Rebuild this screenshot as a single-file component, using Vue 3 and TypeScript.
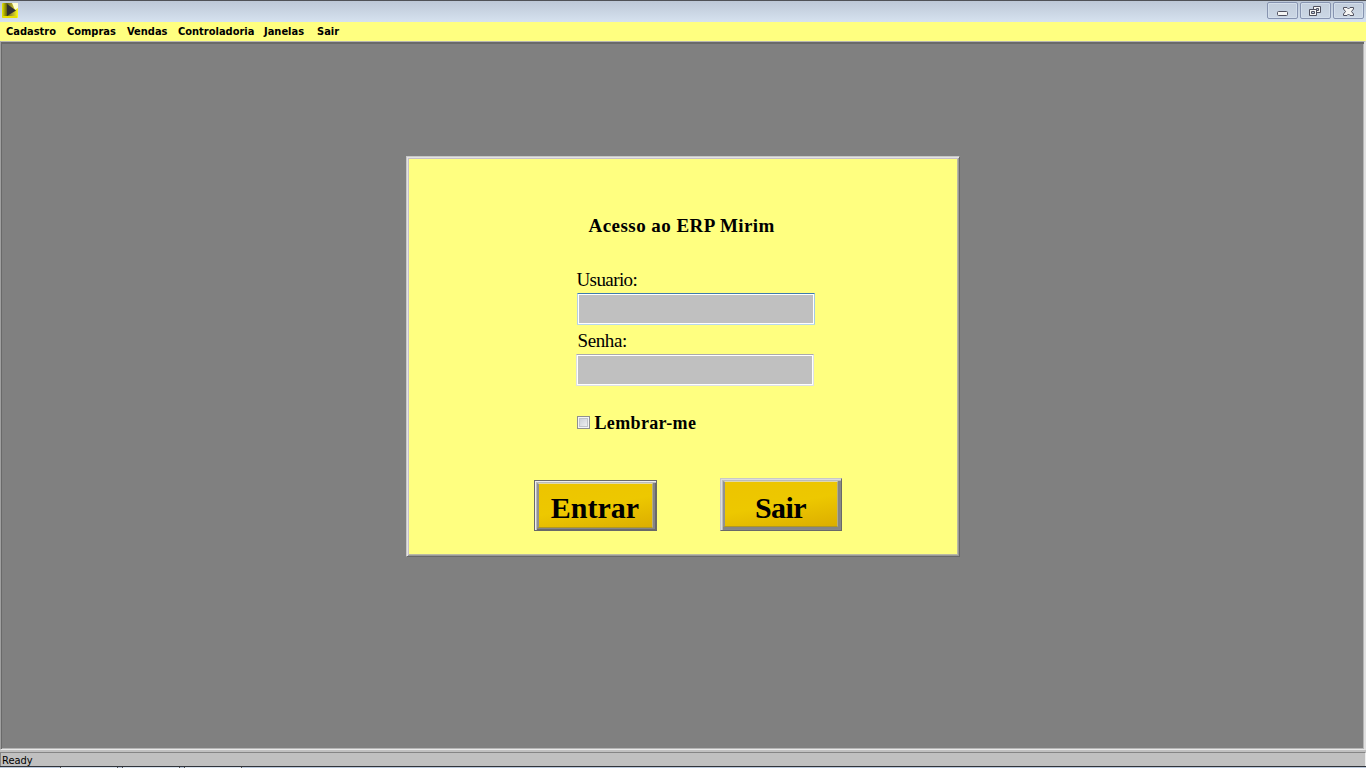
<script setup lang="ts">
import { ref } from 'vue'

const menus: { label: string; width: number }[] = [
  { label: 'Cadastro', width: 51 },
  { label: 'Compras', width: 50 },
  { label: 'Vendas', width: 41 },
  { label: 'Controladoria', width: 76 },
  { label: 'Janelas', width: 43 },
  { label: 'Sair', width: 22 },
]
const user = ref('')
const password = ref('')
const remember = ref(false)
</script>

<template>
  <div class="window">
    <header class="titlebar">
      <svg class="logo" width="16" height="15" viewBox="0 0 16 15">
        <defs>
          <linearGradient id="gold" x1="0" x2="1" y1="0" y2="0">
            <stop offset="0" stop-color="#e8e800" />
            <stop offset="0.3" stop-color="#66660c" />
            <stop offset="0.65" stop-color="#b0a830" />
            <stop offset="1" stop-color="#ffff10" />
          </linearGradient>
        </defs>
        <rect width="16" height="15" rx="1" fill="url(#gold)" />
        <path d="M10 0h6v5l-3 2z" fill="#ffffd0" />
        <path d="M1 13h14v2H1z" fill="#e8df00" />
        <path d="M5 1l9 6.500L5 13z" fill="#303033" />
      </svg>
      <div class="controls">
        <button class="control" aria-label="Minimize">
          <svg width="29" height="15" viewBox="0 0 29 15">
            <rect x="9.5" y="8.500" width="10" height="4" rx="1" fill="#f5f5f3" stroke="#50515f" />
          </svg>
        </button>
        <button class="control" aria-label="Restore">
          <svg width="29" height="15" viewBox="0 0 29 15">
            <path d="M12.500 3.500h7v6h-7z" fill="#f5f5f3" stroke="#50515f" />
            <path d="M15.500 5.500h2v2h-2z" fill="#b8c5d6" stroke="#50515f" />
            <path d="M8.500 6.500h7v6h-7z" fill="#f5f5f3" stroke="#50515f" />
            <path d="M10.500 8.500h3v2h-3z" fill="#b8c5d6" stroke="#50515f" />
          </svg>
        </button>
        <button class="control" aria-label="Close">
          <svg width="29" height="15" viewBox="0 0 29 15">
            <path d="M9.500 4.500h3.500l1.500 1.500 1.500-1.500h3.500v1.500L17.500 8.500l2 2.500v1.500H16l-1.500-1.500-1.500 1.500H9.500V11l2-2.500-2-2.500z" fill="#f5f5f3" stroke="#50515f" />
          </svg>
        </button>
      </div>
    </header>

    <nav class="menubar">
      <span v-for="menu in menus" :key="menu.label" class="menu" :style="{ width: menu.width + 'px' }">{{ menu.label }}</span>
    </nav>

    <main class="workspace">
      <form class="dialog" @submit.prevent>
        <h1 class="title">Acesso ao ERP Mirim</h1>
        <label class="label user-label" for="user">Usuario:</label>
        <input id="user" v-model="user" class="field focused" type="text" />
        <label class="label password-label" for="password">Senha:</label>
        <input id="password" v-model="password" class="field password" type="password" />
        <label class="remember">
          <input v-model="remember" class="check" type="checkbox" />
          <span>Lembrar-me</span>
        </label>
        <div class="actions">
          <button class="action enter" type="submit"><span class="face">Entrar</span></button>
          <button class="action leave" type="button"><span class="face">Sair</span></button>
        </div>
      </form>
    </main>

    <footer class="status"><span>Ready</span></footer>
    <div class="taskbar"><i></i><i></i><i></i></div>
  </div>
</template>

<style>
body { margin: 0; overflow: hidden; }
</style>

<style scoped>
* { box-sizing: border-box; }
.window {
  width: 1366px;
  height: 768px;
  display: flex;
  flex-direction: column;
  overflow: hidden;
  background: #c0c0c0;
  color: #000;
}
.titlebar {
  height: 22px;
  flex: none;
  display: flex;
  justify-content: space-between;
  align-items: flex-start;
  padding: 0 2px;
  border-top: 1px solid #505257;
  background: linear-gradient(#bdc8d7, #d6e2ef);
}
.logo { margin-top: 2px; }
.controls { display: flex; gap: 2px; margin-top: 1px; }
.control {
  width: 31px;
  height: 17px;
  padding: 0;
  border: 1px solid #8794b0;
  border-radius: 2px;
  background: linear-gradient(#c3cedc, #cbd7e5);
  box-shadow: inset 0 0 0 1px #d3deeb;
}
.control svg { display: block; }
.menubar {
  height: 19px;
  flex: none;
  display: flex;
  gap: 10px;
  padding-left: 6px;
  background: #ffff80;
  font: bold 11px/19px "DejaVu Sans Condensed", "DejaVu Sans", sans-serif;
}
.menu { white-space: nowrap; }
.workspace {
  height: 709px;
  flex: none;
  display: flex;
  justify-content: center;
  align-items: flex-start;
  padding-top: 114px;
  border: 1px solid #b5b5b2;
  border-left-color: #a0a0a0;
  border-bottom: 1px solid #e8e8e8;
  border-right: 2px solid #e0e0e0;
  background: #808080;
  box-shadow: inset 1px 1px 0 #696969, inset 0 2px 0 #696969, inset -1px -1px 0 #b5b5b5;
}
.dialog {
  width: 554px;
  height: 401px;
  padding: 54px 0 0 168px;
  border: 1px solid;
  border-color: #c7c7c7 #696969 #696969 #c7c7c7;
  background: #ffff80;
  box-shadow: inset 1px 1px 0 #e3e3e3, inset -1px -1px 0 #999, inset 2px 2px 0 #c8c0c8, inset -2px -2px 0 #b9b9a2;
  font-family: "Liberation Serif", serif;
  display: flex;
  flex-direction: column;
  align-items: flex-start;
}
.title {
  width: 190px;
  height: 30px;
  margin: 0 0 0 14px;
  font-size: 19px;
  line-height: 30px;
  letter-spacing: 0.45px;
  white-space: nowrap;
}
.label { height: 26px; font-size: 19px; line-height: 26px; letter-spacing: -0.6px; margin-left: 2px; }
.user-label { margin-top: 26px; }
.password-label { margin-top: 3px; margin-left: 3px; letter-spacing: -0.4px; }
.field {
  width: 238px;
  height: 32px;
  margin: 0 0 0 2px;
  padding: 2px 5px;
  border: 1px solid #dfe2e6;
  border-top-color: #aaaaae;
  border-radius: 1px;
  background: #c0c0c0;
  box-shadow: inset 0 0 0 1px #fff;
  outline: none;
}
.focused { border-color: #3d7bad #a4c9e3 #b7d9ed #b5cfe7; }
.password { margin-left: 1px; }
.remember {
  display: flex;
  align-items: center;
  gap: 5px;
  height: 24px;
  margin: 25px 0 0 2px;
  font-size: 18px;
  font-weight: bold;
  letter-spacing: 0.35px;
}
.check {
  appearance: none;
  width: 13px;
  height: 13px;
  margin: 0 0 2px;
  border: 1px solid #8e8f8f;
  background: linear-gradient(135deg, #c4c9d1, #f6f6f6);
  box-shadow: inset 0 0 0 1px #f4f4f4, inset 0 0 0 2px #c0c4ca;
}
.actions {
  display: flex;
  align-items: flex-end;
  gap: 63px;
  margin: 43px 0 0 -41px;
}
.action {
  width: 123px;
  height: 51px;
  padding: 2px 3px 2px 2px;
  border: 1px solid #696969;
  background: #858585;
  box-shadow: inset 1px 1px 0 #eee, inset 2px 2px 0 #bbb, inset -1px -1px 0 #696969;
  font: bold 30px/48px "Liberation Serif", serif;
  color: #000;
}
.face {
  display: block;
  height: 45px;
  border-left: 2px solid #929292;
  border-right: 1px solid #b4ad83;
  border-top: 1px solid #dfd8ab;
  border-bottom: 1px solid #b19822;
  background: linear-gradient(170deg, #edc500 10%, #edc800 50%, #dcae00);
}
.leave {
  width: 122px;
  height: 53px;
  padding: 2px 3px 3px 2px;
  border-color: #c8c8c8 #696969 #696969 #c8c8c8;
  box-shadow: inset 1px 1px 0 #ddd, inset 2px 2px 0 #bbb, inset -1px -1px 0 #888;
}
.leave .face { height: 46px; line-height: 52px; letter-spacing: -0.6px; }
.status {
  height: 14px;
  flex: none;
  margin-top: auto;
  padding-left: 1px;
  border-top: 1px solid #858585;
  border-left: 1px solid #858585;
  border-right: 1px solid #eee;
  background: #c0c0c0;
  font: 11px/15px "DejaVu Sans Condensed", "DejaVu Sans", sans-serif;
}
.taskbar {
  height: 2px;
  flex: none;
  display: flex;
  gap: 4px;
  padding-left: 60px;
  border-top: 1px solid #30343a;
  background: #bdcadd;
}
.taskbar i { width: 58px; background: #d9e2ed; border: solid #555; border-width: 0 1px; }
</style>
